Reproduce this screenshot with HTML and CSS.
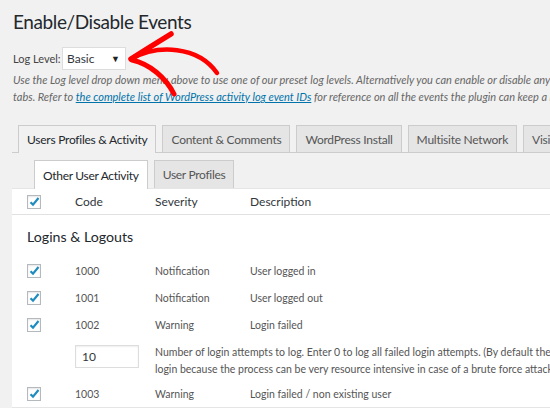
FILE: index.html
```html
<!DOCTYPE html>
<html>
<head>
<meta charset="utf-8">
<link rel="stylesheet" href="styles.css">
</head>
<body>
<div class="wrap">
  <h1 class="title">Enable/Disable Events</h1>
  <div class="level">
    <span class="level-label">Log Level:</span>
    <div class="select"><span>Basic</span><span class="caret">&#9660;</span></div>
  </div>
  <p class="desc">Use the Log level drop down menu above to use one of our preset log levels. Alternatively you can enable or disable any of the individual events from the below</p>
  <p class="desc">tabs. Refer to <a href="#">the complete list of WordPress activity log event IDs</a> for reference on all the events the plugin can keep a log of.</p>

  <div class="tabs">
    <div class="tab active">Users Profiles &amp; Activity</div>
    <div class="tab">Content &amp; Comments</div>
    <div class="tab">WordPress Install</div>
    <div class="tab">Multisite Network</div>
    <div class="tab">Visitor Events</div>
  </div>

  <div class="subtabs">
    <div class="subtab active">Other User Activity</div>
    <div class="subtab">User Profiles</div>
  </div>

  <div class="panel">
    <div class="row head">
      <span class="cb"><svg viewBox="0 0 12 12" width="12" height="12"><path d="M2.5 6.2 L5 8.6 L10.5 2" fill="none" stroke="#1e8cbe" stroke-width="2.2"/></svg></span>
      <span>Code</span><span>Severity</span><span>Description</span>
    </div>
    <h2 class="group">Logins &amp; Logouts</h2>
    <div class="row">
      <span class="cb"><svg viewBox="0 0 12 12" width="12" height="12"><path d="M2.5 6.2 L5 8.6 L10.5 2" fill="none" stroke="#1e8cbe" stroke-width="2.2"/></svg></span>
      <span>1000</span><span>Notification</span><span>User logged in</span>
    </div>
    <div class="row">
      <span class="cb"><svg viewBox="0 0 12 12" width="12" height="12"><path d="M2.5 6.2 L5 8.6 L10.5 2" fill="none" stroke="#1e8cbe" stroke-width="2.2"/></svg></span>
      <span>1001</span><span>Notification</span><span>User logged out</span>
    </div>
    <div class="row">
      <span class="cb"><svg viewBox="0 0 12 12" width="12" height="12"><path d="M2.5 6.2 L5 8.6 L10.5 2" fill="none" stroke="#1e8cbe" stroke-width="2.2"/></svg></span>
      <span>1002</span><span>Warning</span><span>Login failed</span>
    </div>
    <div class="row opt">
      <span></span>
      <span class="num">10</span>
      <div class="opt-text">
        <div>Number of login attempts to log. Enter 0 to log all failed login attempts. (By default the plugin only logs up to 10 failed</div>
        <div>login because the process can be very resource intensive in case of a brute force attack)</div>
      </div>
    </div>
    <div class="row">
      <span class="cb"><svg viewBox="0 0 12 12" width="12" height="12"><path d="M2.5 6.2 L5 8.6 L10.5 2" fill="none" stroke="#1e8cbe" stroke-width="2.2"/></svg></span>
      <span>1003</span><span>Warning</span><span>Login failed / non existing user</span>
    </div>
  </div>
</div>
<svg class="arrow" width="110" height="70" viewBox="120 28 110 70">
  <path d="M131 59 C 145 50, 158 42, 171 34" fill="none" stroke="#f00" stroke-width="5.5" stroke-linecap="round"/>
  <path d="M131 59 C 158 44, 198 46, 217 73" fill="none" stroke="#f00" stroke-width="4.5" stroke-linecap="round"/>
  <path d="M132 60 C 150 64, 166 78, 174 94" fill="none" stroke="#f00" stroke-width="5" stroke-linecap="round"/>
</svg>
</body>
</html>
```
FILE: styles.css
```css
html, body {
  margin: 0;
  padding: 0;
}
body {
  width: 550px;
  height: 408px;
  overflow: hidden;
  background: #f1f1f1;
  font-family: Lato, "Open Sans", sans-serif;
  color: #444;
  position: relative;
}
.wrap {
  padding: 10px 0 0 12px;
  width: 800px;
}
.title {
  margin: 0 0 0 1px;
  font-size: 19px;
  letter-spacing: -0.4px;
  font-weight: 400;
  line-height: 24px;
  color: #23282d;
}
.level {
  display: flex;
  align-items: center;
  margin: 13px 0 0 1px;
  font-size: 11px;
}
.level-label {
  color: #444;
  width: 49px;
}
.select {
  height: 21px;
  background: #fff;
  border: 1px solid #ddd;
  display: flex;
  align-items: center;
  justify-content: space-between;
  padding: 0 5px 0 4px;
  box-sizing: content-box;
  width: 53px;
  font-size: 12px;
  color: #32373c;
}
.caret {
  font-size: 9px;
  color: #222;
}
.desc {
  margin: 0 0 0 1px;
  font-size: 11px;
  font-style: italic;
  color: #666;
  line-height: 17px;
  white-space: nowrap;
}
.level + .desc {
  margin-top: 1px;
}
.desc a {
  color: #0073aa;
}
.tabs {
  display: flex;
  gap: 6px;
  padding-left: 6px;
  margin-top: 20px;
  border-bottom: 1px solid #ccc;
  height: 27px;
}
.tab {
  border: 1px solid #ccc;
  border-bottom: none;
  background: #e5e5e5;
  height: 27px;
  box-sizing: border-box;
  padding: 0 8px;
  display: flex;
  align-items: center;
  font-size: 12px;
  letter-spacing: -0.25px;
  color: #555;
  white-space: nowrap;
}
.tab.active {
  background: #f1f1f1;
  height: 28px;
  color: #23282d;
}
.subtabs {
  display: flex;
  gap: 6px;
  padding-left: 22px;
  margin-top: 7px;
  height: 28px;
}
.subtab {
  border: 1px solid #ccc;
  border-bottom: none;
  background: #e5e5e5;
  height: 28px;
  box-sizing: border-box;
  padding: 0 8px;
  display: flex;
  align-items: center;
  font-size: 12px;
  letter-spacing: -0.3px;
  color: #555;
}
.subtab.active {
  background: #fff;
  height: 29px;
  color: #23282d;
  position: relative;
  z-index: 1;
}
.panel {
  background: #fff;
  border-top: 1px solid #e5e5e5;
  border-bottom: 1px solid #e5e5e5;
  padding-left: 15px;
  height: 218px;
}
.row {
  display: grid;
  grid-template-columns: 48px 80px 95px 1fr;
  align-items: center;
  height: 27px;
  font-size: 10.5px;
  color: #555;
  white-space: nowrap;
}
.row.head {
  height: 25px;
  font-size: 12px;
  color: #32373c;
  border-bottom: 1px solid #e1e1e1;
  margin-left: -15px;
  padding-left: 15px;
}
.cb {
  width: 12px;
  height: 12px;
  border: 1px solid #b4b9be;
  background: #fff;
  box-shadow: inset 0 1px 2px rgba(0,0,0,0.1);
  display: block;
}
.cb svg {
  display: block;
}
.group {
  margin: 0;
  height: 42px;
  display: flex;
  align-items: center;
  font-size: 14.2px;
  font-weight: 400;
  color: #23282d;
}
.row.opt {
  height: 42px;
  align-items: start;
}
.num {
  margin-top: 7px;
  width: 56px;
  height: 21px;
  border: 1px solid #ddd;
  display: flex;
  align-items: center;
  padding-left: 6px;
  font-size: 12px;
  color: #32373c;
  box-shadow: inset 0 1px 2px rgba(0,0,0,0.07);
}
.opt-text {
  padding-top: 6px;
  line-height: 17px;
}
.arrow {
  position: absolute;
  left: 120px;
  top: 28px;
}
```
